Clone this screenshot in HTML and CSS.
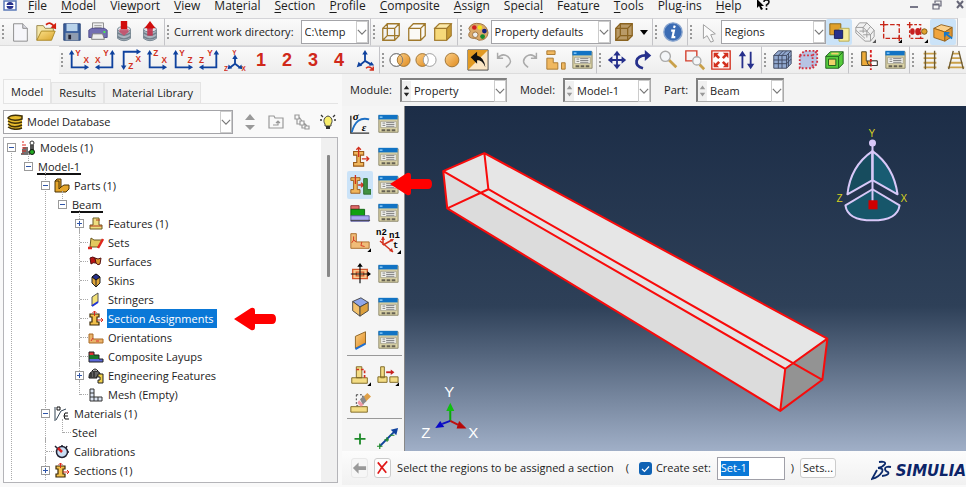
FILE: index.html
```html
<!DOCTYPE html>
<html lang="en">
<head>
<meta charset="utf-8">
<title>Abaqus/CAE</title>
<link rel="stylesheet" href="styles.css">
</head>
<body>
<svg class="defs" aria-hidden="true">
  <defs>
    <linearGradient id="gold" x1="0" y1="0" x2="1" y2="1"><stop offset="0" stop-color="#fbe08a"/><stop offset="1" stop-color="#d9a52c"/></linearGradient>
    <linearGradient id="orange" x1="0" y1="0" x2="1" y2="1"><stop offset="0" stop-color="#fbd08a"/><stop offset="1" stop-color="#e08a1c"/></linearGradient>
    <linearGradient id="sky" x1="0" y1="0" x2="0" y2="1"><stop offset="0" stop-color="#1c2d47"/><stop offset="0.58" stop-color="#2e4058"/><stop offset="1" stop-color="#a0afc7"/></linearGradient>
  </defs>
  <symbol id="i-manager" viewBox="0 0 24 24"><path d="M2 3h21v18H2z" fill="#ddd5a8" stroke="#8a8468"/><path d="M1.500 2h21v5h-21z" fill="#1173c4"/><path d="M3 4.500h3" stroke="#8fd0ff" stroke-width="1.500"/><path d="M4 9h17v7H4z" fill="#f2f2ee" stroke="#9a947a" stroke-width=".8"/><path d="M6 11h3M6 13.500h3M10 10.500h9M10 12.500h9M10 14.500h9" stroke="#777" stroke-width="1"/><path d="M5 17.800h4v2H5zM10.500 17.800h4v2h-4zM16 17.800h4v2h-4z" fill="#666253"/></symbol>
  <symbol id="i-ell-right" viewBox="0 0 24 24"><path d="M4 4v16h16" fill="none" stroke="#0f429e" stroke-width="2"/><path d="M4 1l3 5H1zM23 20l-5-3v6z" fill="#0f429e"/></symbol>
  <symbol id="i-ell-left" viewBox="0 0 24 24"><path d="M20 4v16H5" fill="none" stroke="#0f429e" stroke-width="2"/><path d="M20 1l3 5h-6zM1 20l5-3v6z" fill="#0f429e"/></symbol>
  <symbol id="i-isection" viewBox="0 0 24 24"><path d="M5 6h11v4h-3.500v8H16v4H5v-4h3.500v-8H5z" fill="#f0b65c" stroke="#9a5a18" stroke-width="1.200"/><path d="M10.500 12V1.500M8 4l2.500-2.500L13 4M14 14h7.500M19 11.500l2.500 2.500-2.500 2.500" fill="none" stroke="#d3301e" stroke-width="1.500"/></symbol>
  <symbol id="i-lpart" viewBox="0 0 16 16"><path d="M1 3l2-2h4v8l3-2h5v4l-3 3H1z" fill="#e5a62c" stroke="#4a3205"/><path d="M1 3h4v8l2-2" fill="none" stroke="#4a3205"/></symbol>
  <symbol id="i-isection-s" viewBox="0 0 16 16"><path d="M2 3h9v3H9v5h2v3H2v-3h2V6H2z" fill="#f2c14c" stroke="#3d2a08" stroke-width="1.200"/><path d="M6.500 0v5M9 9h6M13 7l2 2-2 2M4.500 2l2-2 2 2" stroke="#d92a1c" fill="none"/></symbol>
  <symbol id="i-chevron" viewBox="0 0 12 12"><path d="M1 3.500l5 5 5-5" fill="none" stroke="#777" stroke-width="1.400"/></symbol>
  <symbol id="i-callout" viewBox="0 0 44 26"><path d="M1 13L18 2q4-1 4 3v3h17q4 0 4 5t-4 5H22v3q0 4-4 3z" fill="#f00"/></symbol>
  <symbol id="i-spin" viewBox="0 0 10 20"><path d="M5 4l3 4H2zM5 16l3-4H2z" fill="currentColor"/></symbol>
</svg>

<nav class="menubar" aria-label="Main menu">
  <svg class="app-icon" viewBox="0 0 14 12"><path d="M1 1h12v9H1z" fill="#fff" stroke="#5a78b8" stroke-width="1.500"/><circle cx="7" cy="5.500" r="3.500" fill="#26308c"/><path d="M3 5.500h8" stroke="#fff"/></svg>
  <button><u>F</u>ile</button><button><u>M</u>odel</button><button>Vie<u>w</u>port</button><button><u>V</u>iew</button><button>Mat<u>e</u>rial</button><button><u>S</u>ection</button><button><u>P</u>rofile</button><button><u>C</u>omposite</button><button><u>A</u>ssign</button><button>Specia<u>l</u></button><button>Feat<u>u</u>re</button><button><u>T</u>ools</button><button>Plu<u>g</u>-ins</button><button><u>H</u>elp</button>
  <button aria-label="Context help"><svg width="14" height="12" viewBox="0 0 14 12"><path d="M1 0v8l2-2 2 4 2-1-2-3h3L2 0z"/><path d="M8 2q0-2 2.500-2T13 2q0 1.500-2.500 3v1.500M10.500 8v2" fill="none" stroke="#111" stroke-width="1.600"/></svg></button>
  <div class="window-controls">
    <button aria-label="Minimize"><svg width="12" height="12" viewBox="0 0 12 12"><path d="M2 7h8" stroke="#778" stroke-width="2"/></svg></button>
    <button aria-label="Restore"><svg width="12" height="12" viewBox="0 0 12 12"><path d="M4 3V1h6v5H8M2 4h6v5H2zM2 5h6" fill="none" stroke="#667" stroke-width="1.200"/></svg></button>
    <button aria-label="Close"><svg width="12" height="12" viewBox="0 0 12 12"><path d="M3 1l6 7M9 1L3 8" stroke="#667" stroke-width="2"/></svg></button>
  </div>
</nav>

<div class="toolbar-row">
  <div class="toolbar">
    <button class="tool" aria-label="New"><svg viewBox="0 0 24 24"><path d="M5 3h10l5 5v14H5z" fill="#f6f6fa" stroke="#888"/><path d="M15 3v5h5" fill="#d8d8e0" stroke="#888"/></svg></button>
    <button class="tool" aria-label="Open"><svg viewBox="0 0 24 24"><path d="M2 21V5h7l2 3h9v4" fill="#f4e6a8" stroke="#97854a"/><path d="M2 21l5-10h15l-4 10z" fill="url(#gold)" stroke="#a98622"/><path d="M12 4q5-4 9 2" fill="none" stroke="#d3200f" stroke-width="2"/><path d="M23 2v7l-6-2z" fill="#d3200f"/></svg></button>
    <button class="tool" aria-label="Save"><svg viewBox="0 0 24 24"><path d="M3 3h18v18H3z" fill="#3a5f9c" stroke="#2c477a"/><path d="M6 3h12v8H6z" fill="#b9d3ea"/><path d="M5 13h14v8H5z" fill="#8e9cb0"/><path d="M8 15h3v5H8z" fill="#223"/></svg></button>
    <button class="tool" aria-label="Print"><svg viewBox="0 0 24 24"><path d="M6 2h12v8H6z" fill="#eee" stroke="#888"/><path d="M8 5h8M8 7h8" stroke="#999"/><path d="M2 10l3-2h14l3 2v8H2z" fill="#726eb2" stroke="#4d4a88"/><path d="M6 14h11l2 6H5z" fill="#eee" stroke="#777"/><path d="M18 12h2" stroke="#4f4" stroke-width="2"/></svg></button>
    <button class="tool" aria-label="Save to database"><svg viewBox="0 0 24 24"><path d="M5 9v10q7 5 14 0V9z" fill="#aab5bf" stroke="#71808c"/><ellipse cx="12" cy="9" rx="7" ry="3" fill="#dfe5ea" stroke="#71808c"/><path d="M5 13q7 5 14 0M5 17q7 5 14 0" fill="none" stroke="#71808c" stroke-width="1.500"/><path d="M8.500 0h7v9h-7z" fill="#d10d0d"/><path d="M7 9h10v3l-5 4-5-4z" fill="#c4506a" opacity=".9"/></svg></button>
    <button class="tool" aria-label="Load from database"><svg viewBox="0 0 24 24"><path d="M5 9v10q7 5 14 0V9z" fill="#aab5bf" stroke="#71808c"/><ellipse cx="12" cy="9" rx="7" ry="3" fill="#dfe5ea" stroke="#71808c"/><path d="M5 13q7 5 14 0M5 17q7 5 14 0" fill="none" stroke="#71808c" stroke-width="1.500"/><path d="M9 8H6l6-8 6 8h-3v1H9z" fill="#d10d0d"/><path d="M9 8h6v8H9z" fill="#c4304a" opacity=".9"/></svg></button>
  </div>
  <div class="toolbar">
    <label class="bar-label" for="workdir">Current work directory:</label>
    <span class="combo workdir"><select id="workdir"><option>C:\temp</option></select><svg class="chev"><use href="#i-chevron"/></svg></span>
  </div>
  <div class="toolbar">
    <button class="tool" aria-label="Wireframe"><svg viewBox="0 0 24 24" fill="none" stroke="#a0792c" stroke-width="1.400"><path d="M3 8h13v13H3zM8 3h13v13H8zM3 8l5-5M16 8l5-5M16 21l5-5M3 21l5-5"/></svg></button>
    <button class="tool" aria-label="Hidden line"><svg viewBox="0 0 24 24" fill="#fbfaf6" stroke="#a0792c" stroke-width="1.400"><path d="M3 8l5-5h13v13l-5 5H3zM3 8h13v13M16 8l5-5"/></svg></button>
    <button class="tool" aria-label="Shaded"><svg viewBox="0 0 24 24" stroke="#a0792c" stroke-width="1.200"><path d="M3 8l5-5h13v13l-5 5H3z" fill="#c99c34"/><path d="M3 8h13v13H3z" fill="#f6d97a"/><path d="M3 8l5-5h13l-5 5z" fill="#fbe9a8"/></svg></button>
  </div>
  <div class="toolbar">
    <button class="tool" aria-label="Color code"><svg viewBox="0 0 24 24"><path d="M2 8q3-7 13-5 7 2 8 10-1 8-10 8-3-2-5-2-7 0-6-5 3-2 0-6z" fill="#dba968" stroke="#9a6f3c"/><circle cx="8" cy="7" r="2.500" fill="#d21f1f"/><circle cx="14" cy="7" r="2.500" fill="#f2e21c"/><circle cx="19" cy="11" r="2.600" fill="#14217c"/><circle cx="17" cy="17" r="2.600" fill="#168a2c"/><circle cx="9" cy="15" r="3" fill="#eee" stroke="#9a6f3c"/></svg></button>
    <span class="combo colors"><select aria-label="Color mapping"><option>Property defaults</option></select><svg class="chev"><use href="#i-chevron"/></svg></span>
    <button class="tool" aria-label="Translucency"><svg viewBox="0 0 24 24" fill="#b99a67" stroke="#8a6320" stroke-width="1.400"><path d="M3 8l5-5h13v13l-5 5H3z"/><path d="M3 8h13v13M16 8l5-5M8 3v13h13M3 21l5-5" fill="none"/></svg></button>
    <button class="caret" aria-label="Translucency options"><svg viewBox="0 0 14 24"><path d="M3 10h8l-4 5z"/></svg></button>
  </div>
  <div class="toolbar">
    <button class="tool" aria-label="Query"><svg viewBox="0 0 24 24"><circle cx="12" cy="12" r="10" fill="#3b6cb4" stroke="#8aa6cf" stroke-width="1.500"/><path d="M14 5l-1 2.500M10 10.500h3l-1.500 7h3" stroke="#fff" stroke-width="2.400" fill="none"/></svg></button>
  </div>
  <div class="toolbar">
    <button class="tool" aria-label="Select"><svg viewBox="0 0 24 24"><path d="M7 4v15l4-3 4 7 3-1-3-7 5-1z" fill="#fafafa" stroke="#999"/></svg></button>
    <span class="combo regions"><select aria-label="Selection filter"><option>Regions</option></select><svg class="chev"><use href="#i-chevron"/></svg></span>
    <button class="tool on" aria-label="Select from group"><svg viewBox="0 0 24 24"><path d="M2 3h12v12H2z" fill="#dfa02c" stroke="#8a6516"/><path d="M12 8h11v14H12z" fill="#f6ec9c" stroke="#b7a94c"/><path d="M7 10h9v9H7z" fill="#26308c" stroke="#141b5c"/></svg></button>
    <button class="tool" aria-label="Select entities"><svg viewBox="0 0 24 24" fill="#f1f1f1" stroke="#999"><path d="M2 7l4-5h8l8 8v7l-4 5h-6L2 13z"/><path d="M2 7h8l8 8v7M10 7l4-5M18 15l4-5M6 11h8l4-5M10 15h8M10 7v6M14 11v7M2 10l10 9" fill="none"/><path d="M24 20v4h-4z" fill="#555" stroke="none"/></svg></button>
    <button class="tool" aria-label="Drag shape"><svg viewBox="0 0 24 24"><path d="M4 4h17v15H4z" fill="none" stroke="#c8281a" stroke-width="1.500" stroke-dasharray="5 2"/><path d="M0 4h7M4 0v7M18 19h6M21 16v6" stroke="#c8281a" stroke-width="1.500"/><path d="M24 20v4h-4z"/></svg></button>
    <button class="tool" aria-label="Drag region"><svg viewBox="0 0 24 24"><path d="M4 4h12v15H4z" fill="none" stroke="#c8281a" stroke-width="1.500" stroke-dasharray="3 2"/><path d="M1 4h6M4 1v6M13 19h6" stroke="#c8281a" stroke-width="1.500"/><ellipse cx="7" cy="11.500" rx="2.500" ry="3.500" fill="#c81f1f"/><ellipse cx="13" cy="11.500" rx="3" ry="4" fill="#c81f1f"/><circle cx="20" cy="11.500" r="3" fill="#e0a22c" stroke="#7a5516"/><path d="M24 20v4h-4z"/></svg></button>
    <button class="tool on" aria-label="Select from exterior"><svg viewBox="0 0 24 24"><path d="M2 8l8-4 12 3-8 5z" fill="#fbd08a" stroke="#94601a"/><path d="M2 8l12 4v10L2 18z" fill="#f0a43c" stroke="#94601a"/><path d="M14 12l8-5v10l-8 5z" fill="#dd9430" stroke="#94601a"/><path d="M22 19l-8-6M14 17v-4h5" fill="none" stroke="#1878c8" stroke-width="2"/></svg></button>
  </div>
</div>

<div class="toolbar-row views">
  <div class="toolbar">
    <button class="tool" aria-label="Front view"><svg viewBox="0 0 24 24"><use href="#i-ell-right"/><text class="axis" x="8" y="8">Y</text><text class="axis" x="17" y="15">X</text></svg></button>
    <button class="tool" aria-label="Back view"><svg viewBox="0 0 24 24"><use href="#i-ell-left"/><text class="axis" x="10" y="8">Y</text><text class="axis" x="1" y="15">X</text></svg></button>
    <button class="tool" aria-label="Top view"><svg viewBox="0 0 24 24"><path d="M4 19V3h15" fill="none" stroke="#0f429e" stroke-width="2"/><path d="M4 23l3-5H1zM23 3l-5-3v6z" fill="#0f429e"/><text class="axis" x="17" y="14">X</text><text class="axis" x="9" y="22">Z</text></svg></button>
    <button class="tool" aria-label="Bottom view"><svg viewBox="0 0 24 24"><use href="#i-ell-right"/><text class="axis" x="8" y="8">Z</text><text class="axis" x="17" y="15">X</text></svg></button>
    <button class="tool" aria-label="Left view"><svg viewBox="0 0 24 24"><use href="#i-ell-right"/><text class="axis" x="8" y="8">Y</text><text class="axis" x="17" y="15">Z</text></svg></button>
    <button class="tool" aria-label="Right view"><svg viewBox="0 0 24 24"><use href="#i-ell-left"/><text class="axis" x="10" y="8">Y</text><text class="axis" x="1" y="15">Z</text></svg></button>
    <button class="tool" aria-label="Isometric view"><svg viewBox="0 0 24 24"><path d="M12 8v8M12 16l-5 4M12 16l5 4" stroke="#0f429e" stroke-width="2"/><path d="M12 6l3 5H9zM4 22l1-5 4 4zM20 22l-1-5-4 4z" fill="#0f429e"/><text class="axis small" x="9" y="6">Y</text><text class="axis small" x="0" y="24">Z</text><text class="axis small" x="19" y="24">X</text></svg></button>
    <button class="tool num">1</button><button class="tool num">2</button><button class="tool num">3</button><button class="tool num">4</button>
    <button class="tool" aria-label="Custom view"><svg viewBox="0 0 24 24"><path d="M12 5v8l-6 5M12 13l7 4" fill="none" stroke="#0f429e" stroke-width="2"/><path d="M12 1l3 5H9zM3 20l2-6 4 4zM22 18l-6 0 3-4z" fill="#0f429e"/><path d="M13 21q4-3 7 1M21 19v4h-4" fill="none" stroke="#d3301e" stroke-width="1.600"/></svg></button>
  </div>
  <div class="toolbar">
    <button class="tool" aria-label="Intersection"><svg viewBox="0 0 24 24"><circle cx="8" cy="12" r="7" fill="#fff" stroke="#999"/><circle cx="16" cy="12" r="7" fill="url(#orange)" stroke="#9a7030"/><circle cx="8" cy="12" r="7" fill="none" stroke="#777"/></svg></button>
    <button class="tool" aria-label="Difference"><svg viewBox="0 0 24 24"><circle cx="8" cy="12" r="7" fill="url(#orange)" stroke="#9a7030"/><circle cx="16" cy="12" r="7" fill="#fff" stroke="#999"/><path d="M12 6q5 6 0 12" fill="none" stroke="#999"/></svg></button>
    <button class="tool" aria-label="Replace"><svg viewBox="0 0 24 24"><circle cx="12" cy="12" r="7.500" fill="url(#orange)" stroke="#9a7030"/></svg></button>
    <button class="tool" aria-label="Replace all"><svg viewBox="0 0 24 24"><path d="M1 1h22v22H1z" fill="#fbe6c4" stroke="#444"/><path d="M1 1h22L1 23z" fill="#e29a22"/><path d="M4 9l7-6v4q8 2 9 13-3-8-9-8v4z" fill="#111"/></svg></button>
    <button class="tool" aria-label="Undo"><svg viewBox="0 0 24 24" fill="none" stroke="#aaa" stroke-width="1.600"><path d="M5 4v6h6M5 10q5-6 11-2 7 6-2 12"/></svg></button>
    <button class="tool" aria-label="Redo"><svg viewBox="0 0 24 24" fill="none" stroke="#aaa" stroke-width="1.600"><path d="M19 4v6h-6M19 10q-5-6-11-2-7 6 2 12"/></svg></button>
    <button class="tool" aria-label="Instances"><svg viewBox="0 0 24 24" fill="#f0b860" stroke="#a8762c"><path d="M2 2h9v4H2zM2 10h7v5h5v7H2zM18 15h4v7h-4z"/></svg></button>
    <button class="tool" aria-label="Display group manager"><svg viewBox="0 0 24 24"><use href="#i-manager"/></svg></button>
  </div>
  <div class="toolbar">
    <button class="tool" aria-label="Pan"><svg viewBox="0 0 24 24" stroke="#26308c" stroke-width="2" fill="#26308c"><path d="M12 4v16M4 12h16"/><path d="M12 2l4 5H8zM12 22l4-5H8zM2 12l5-4v8zM22 12l-5-4v8z" stroke="none"/></svg></button>
    <button class="tool" aria-label="Rotate"><svg viewBox="0 0 24 24"><path d="M12 21q-8-2-7-8 2-7 12-6" fill="none" stroke="#26308c" stroke-width="3"/><path d="M14 1l7 6-7 6z" fill="#26308c"/></svg></button>
    <button class="tool" aria-label="Magnify"><svg viewBox="0 0 24 24"><path d="M12 12l8 8" stroke="#c9a04a" stroke-width="3"/><circle cx="8" cy="8" r="5.500" fill="#f4f6f8" stroke="#aaa" stroke-width="1.500"/></svg></button>
    <button class="tool" aria-label="Box zoom"><svg viewBox="0 0 24 24"><path d="M2 2h12v11H2z" fill="none" stroke="#d3402e" stroke-width="1.500"/><path d="M17 17l5 5" stroke="#c9a04a" stroke-width="3"/><circle cx="14" cy="13" r="4.500" fill="#f4f6f8" stroke="#aaa" stroke-width="1.500"/></svg></button>
    <button class="tool" aria-label="Auto-fit"><svg viewBox="0 0 24 24"><path d="M2 2h20v20H2z" fill="#fff" stroke="#d3301e" stroke-width="1.500"/><path d="M4 4h6L8 6l3 3-2 2-3-3-2 2zM20 4v6l-2-2-3 3-2-2 3-3-2-2zM4 20v-6l2 2 3-3 2 2-3 3 2 2zM20 20h-6l2-2-3-3 2-2 3 3 2-2z" fill="#d3301e"/></svg></button>
    <button class="tool" aria-label="Cycle views"><svg viewBox="0 0 24 24"><path d="M7 6v15M16 3v15" stroke="#26308c" stroke-width="2"/><path d="M7 2l4 6H3zM16 22l4-6h-8z" fill="#26308c"/></svg></button>
  </div>
  <div class="toolbar">
    <button class="tool" aria-label="Mesh view"><svg viewBox="0 0 24 24" stroke="#3d465e"><path d="M3 7l5-5h14v14l-5 5H3z" fill="#91a8cf"/><path d="M3 7h14v14M17 7l5-5M8 7v14M12 7v14M3 12h14l5-5M3 16h14l5-5M8 7l5-5M12 7l5-5M19 5v14" fill="none"/></svg></button>
    <button class="tool" aria-label="Mesh nodes"><svg viewBox="0 0 24 24"><path d="M3 7l5-5h14v14l-5 5H3z" fill="#b7c3e4"/><path d="M3 7l5-5h14v14l-5 5H3zM3 7h14v14M17 7l5-5" fill="none" stroke="#d3303e" stroke-width="2" stroke-dasharray="2 2"/></svg></button>
    <button class="tool" aria-label="Reference view"><svg viewBox="0 0 24 24" stroke="#1d5c1d"><path d="M3 8l5-5h14v13l-5 5H3z" fill="#56cc3c"/><path d="M3 8h14v13M17 8l5-5" fill="none"/><path d="M6 11h8v7H6z" fill="#efd36a"/><path d="M9 5h8" stroke="#efd36a" stroke-width="2"/></svg></button>
  </div>
  <div class="toolbar">
    <button class="tool" aria-label="Beam offset"><svg viewBox="0 0 24 24"><path d="M4 3h5v10h12v5H4z" fill="#edaa38" stroke="#4c3d18"/><path d="M14 13h7v5h-7z" fill="#fff" stroke="#333"/><path d="M14 1v22" stroke="#d91e1e" stroke-width="2" stroke-dasharray="3 2"/><path d="M10 13q0 5 4 5" fill="none" stroke="#333"/></svg></button>
    <button class="tool" aria-label="Manager"><svg viewBox="0 0 24 24"><use href="#i-manager"/></svg></button>
  </div>
  <div class="toolbar">
    <button class="tool" aria-label="Parallel"><svg viewBox="0 0 24 24"><path d="M5 5h14M5 10h14M5 15h14M5 20h14" stroke="#c9a04a" stroke-width="2"/><path d="M7 2v20M17 2v20" stroke="#6d5a30" stroke-width="1.500"/></svg></button>
    <button class="tool" aria-label="Perspective"><svg viewBox="0 0 24 24"><path d="M8 5h8M7 10h10M5 15h14M3 20h18" stroke="#c9a04a" stroke-width="2"/><path d="M9 2L4 22M15 2l5 20" stroke="#6d5a30" stroke-width="1.500"/></svg></button>
  </div>
</div>

<div class="workspace">
  <aside class="browser">
    <div class="tabs" role="tablist">
      <button class="tab active" role="tab" aria-selected="true">Model</button><button class="tab" role="tab">Results</button><button class="tab" role="tab">Material Library</button>
    </div>
    <div class="tree-tools">
      <span class="combo database">
        <svg class="db-icon" viewBox="0 0 16 16"><path d="M1 3v4l1 6q6 4 13 1V2z" fill="#e6bb2e"/><path d="M1 4q3-4 14-2v3Q6 8 1 4zM1 7q5 4 14 1M1 10q5 5 14 1M1 13q6 4 14 1" fill="#e6bb2e" stroke="#3f3008" stroke-width="1.500"/></svg>
        <select aria-label="Database"><option>Model Database</option></select><svg class="chev"><use href="#i-chevron"/></svg>
      </span>
      <button class="mini" aria-label="Previous or next"><svg viewBox="0 0 18 18" fill="#999"><path d="M9 1l5 6H4zM9 17l5-5H4z"/></svg></button>
      <button class="mini" aria-label="Up"><svg viewBox="0 0 18 18" fill="none" stroke="#999" stroke-width="1.200"><path d="M2 15V3h5l1 2h8v10zM6 12h5V8M9 10l2-2 2 2"/></svg></button>
      <button class="mini" aria-label="Structure"><svg viewBox="0 0 18 18" fill="none" stroke="#999" stroke-width="1.200"><path d="M2 2h4v4H2zM7 8h4v4H7zM12 13h4v3h-4zM6 4l3 4M4 6v5h3M9 12v3h3M11 10l3 3"/></svg></button>
      <button class="mini" aria-label="Tips"><svg viewBox="0 0 18 18"><path d="M9 3a5 5 0 0 1 3 8v2H6v-2a5 5 0 0 1 3-8z" fill="#f8ee6c" stroke="#444"/><path d="M7 13h4v3H7z" fill="#333"/><path d="M1 7h2M15 7h2M2 2l2 2M16 2l-2 2" stroke="#333" stroke-width="1.300"/></svg></button>
    </div>
    <div class="tree-box">
      <ul class="tree">
        <li class="more"><div class="row"><button class="exp minus" aria-label="Collapse"></button><svg class="ico" viewBox="0 0 16 16"><path d="M1 14h9M2 12h7M2 10h6M3 8h5" stroke="#444" stroke-width="1.300"/><path d="M3 1v13M5 4v8" stroke="#e0281e" stroke-dasharray="2 1"/><path d="M10 5h4v8h-4z" fill="#555"/><circle cx="12" cy="12" r="2.500" fill="#2a2" stroke="#111"/><circle cx="12" cy="3" r="2" fill="#fff" stroke="#333"/></svg><span class="name">Models (1)</span></div>
          <ul>
            <li><div class="row"><button class="exp minus" aria-label="Collapse"></button><span class="name current">Model-1</span></div>
              <ul>
                <li><div class="row"><button class="exp minus" aria-label="Collapse"></button><svg class="ico"><use href="#i-lpart"/></svg><span class="name">Parts (1)</span></div>
                  <ul>
                    <li><div class="row"><button class="exp minus" aria-label="Collapse"></button><span class="name current">Beam</span></div>
                      <ul>
                        <li><div class="row"><button class="exp plus" aria-label="Expand"></button><svg class="ico" viewBox="0 0 16 16"><path d="M5 9V2h6v7h3v4H2V9z" fill="#eedd80" stroke="#6b5a22"/><path d="M8 4h4M2 10h12" stroke="#b23a1e"/></svg><span class="name">Features (1)</span></div></li>
                        <li><div class="row leaf"><svg class="ico" viewBox="0 0 16 16"><path d="M3 3l3 2h8l-3 7H2z" fill="#e3c85e" stroke="#6b5a22"/><path d="M10 13l5-9M0 13h4" stroke="#e0281e" stroke-width="2.500"/></svg><span class="name">Sets</span></div></li>
                        <li><div class="row leaf"><svg class="ico" viewBox="0 0 16 16"><path d="M2 4q3-2 5 0l1 5q-3-1-5 1z" fill="#b81414" stroke="#561010"/><path d="M7 4q3 2 6 0l-1 6q-2 2-4-1z" fill="#d9952e" stroke="#561010"/></svg><span class="name">Surfaces</span></div></li>
                        <li><div class="row leaf"><svg class="ico" viewBox="0 0 16 16"><path d="M4 4l4-3 4 3v6l-4 4-4-4z" fill="#e0a63a" stroke="#222"/><path d="M4 4l4-3 4 3-4 3z" fill="#26308c" stroke="#111"/><path d="M8 7v7" stroke="#222"/></svg><span class="name">Skins</span></div></li>
                        <li><div class="row leaf"><svg class="ico" viewBox="0 0 16 16"><path d="M4 5l6-4v9l-6 4z" fill="#f3e178" stroke="#555"/><path d="M4 14l6-4" stroke="#2036d8" stroke-width="2"/></svg><span class="name">Stringers</span></div></li>
                        <li><div class="row leaf"><svg class="ico"><use href="#i-isection-s"/></svg><span class="name selected">Section Assignments</span><svg class="callout"><use href="#i-callout"/></svg></div></li>
                        <li><div class="row leaf"><svg class="ico" viewBox="0 0 16 16"><path d="M1 4h4v5h10v4H1z" fill="#eab26a" stroke="#a86a26"/><path d="M3 11l2-3M8 11h3" stroke="#d33"/></svg><span class="name">Orientations</span></div></li>
                        <li><div class="row leaf"><svg class="ico" viewBox="0 0 16 16"><path d="M1 3h5v3H1z" fill="#d33"/><path d="M1 6h10v4H1z" fill="#187a2a"/><path d="M1 10h14v3H1z" fill="#5a68d8"/><path d="M1 3h5v3h5v4h4v3H1z" fill="none" stroke="#222"/></svg><span class="name">Composite Layups</span></div></li>
                        <li><div class="row"><button class="exp plus" aria-label="Expand"></button><svg class="ico" viewBox="0 0 16 16"><path d="M1 9q0-6 6-6t5 5H9v2H1z" fill="#666" stroke="#111"/><path d="M4 3q3-4 6 0M3 5v4M6 4v5" fill="none" stroke="#111"/><path d="M10 6h5v9h-5v-3h2v-3h-2z" fill="#f0d04a" stroke="#222"/></svg><span class="name">Engineering Features</span></div></li>
                        <li><div class="row leaf"><svg class="ico" viewBox="0 0 16 16"><path d="M2 2h4v8h8v4H2zM2 6h4M2 10h4v4M10 10v4" fill="#dce4f2" stroke="#333"/></svg><span class="name">Mesh (Empty)</span></div></li>
                      </ul>
                    </li>
                  </ul>
                </li>
                <li><div class="row"><button class="exp minus" aria-label="Collapse"></button><svg class="ico" viewBox="0 0 16 16"><path d="M1 1v14M2 14l5-9 5-2" fill="none" stroke="#345"/><path d="M6 1H3v3h3V1M14 7h-3l-1 3 1 3h4M10 10h4" fill="none" stroke="#111"/></svg><span class="name">Materials (1)</span></div>
                  <ul><li><div class="row leaf"><span class="name">Steel</span></div></li></ul>
                </li>
                <li><div class="row leaf"><svg class="ico" viewBox="0 0 16 16"><circle cx="8" cy="8" r="5.500" fill="#c9def4" stroke="#223" stroke-width="1.500"/><path d="M1 2l3 3M15 8h-2M8 1v2M13 2l-1 2" stroke="#223" stroke-width="1.500"/><path d="M8 8L4 4" stroke="#d22" stroke-width="2.500"/></svg><span class="name">Calibrations</span></div></li>
                <li class="more"><div class="row"><button class="exp plus" aria-label="Expand"></button><svg class="ico"><use href="#i-isection-s"/></svg><span class="name">Sections (1)</span></div></li>
              </ul>
            </li>
          </ul>
        </li>
      </ul>
      <div class="scrollbar"><span></span></div>
    </div>
  </aside>

  <main class="stage">
    <div class="context">
      <label for="module">Module:</label>
      <span class="combo sunken module"><svg class="spin"><use href="#i-spin"/></svg><select id="module"><option>Property</option></select><svg class="chev"><use href="#i-chevron"/></svg></span>
      <label for="model">Model:</label>
      <span class="combo sunken"><svg class="spin dim"><use href="#i-spin"/></svg><select id="model"><option>Model-1</option></select><svg class="chev"><use href="#i-chevron"/></svg></span>
      <label for="part">Part:</label>
      <span class="combo sunken"><svg class="spin dim"><use href="#i-spin"/></svg><select id="part"><option>Beam</option></select><svg class="chev"><use href="#i-chevron"/></svg></span>
    </div>
    <div class="canvas-row">
      <div class="toolbox">
        <div class="set">
          <button class="tool" aria-label="Create material"><svg viewBox="0 0 24 24"><path d="M2 3v19h20" fill="none" stroke="#333" stroke-width="1.500"/><path d="M3 21Q8 3 22 7" fill="none" stroke="#1d6fc4" stroke-width="2"/><text class="greek" x="4" y="8">σ</text><text class="greek" x="14" y="20">ε</text></svg></button>
          <button class="tool" aria-label="Material manager"><svg><use href="#i-manager"/></svg></button>
        </div>
        <div class="set">
          <button class="tool" aria-label="Create section"><svg><use href="#i-isection"/></svg></button>
          <button class="tool" aria-label="Section manager"><svg><use href="#i-manager"/></svg></button>
          <button class="tool on" aria-label="Assign section"><svg viewBox="0 0 24 24"><path d="M2 4h10v3H9v10h3v4H2v-4h3V7H2z" fill="#f0b65c" stroke="#9a5a18"/><path d="M7 1v10M10 12h5M13 9.500l3 2.500-3 2.500" stroke="#d3301e" stroke-width="1.400" fill="none"/><path d="M16 5h4v12h4v5h-8z" fill="#3f9142" stroke="#2a6a2c"/></svg></button>
          <button class="tool target" aria-label="Section assignment manager"><svg><use href="#i-manager"/></svg><svg class="callout"><use href="#i-callout"/></svg></button>
          <button class="tool" aria-label="Create composite layup"><svg viewBox="0 0 24 24"><path d="M2 4h9v4H2z" fill="#e26a6a" stroke="#8a3030"/><path d="M2 8h15v7H2z" fill="#12a012" stroke="#0b5f0b"/><path d="M2 15h20v6H2z" fill="#a8a8f0" stroke="#5a5a9c"/><path d="M2 20h21" stroke="#333"/></svg></button>
          <button class="tool" aria-label="Layup manager"><svg><use href="#i-manager"/></svg></button>
          <button class="tool" aria-label="Assign orientation"><svg viewBox="0 0 24 24"><path d="M2 4h6v9h14v7H2z" fill="#f0bc78" stroke="#a86a26"/><path d="M5 7v4M5 11l-2 3M5 11l3 2M14 13l-1 4M13 17l4 1" stroke="#d3301e"/><path d="M24 20v4h-4z"/></svg></button>
          <button class="tool wide" aria-label="Assign beam orientation"><svg viewBox="0 0 26 26"><path d="M8 17V9M8 17l9-5M5 13l13 11" stroke="#d3301e" stroke-width="1.500"/><path d="M8 8l2 4H6zM19 11l-4 0 2 3zM18 24l-1-4-3 3z" fill="#d3301e"/><text class="mono" x="1" y="7">n2</text><text class="mono" x="14" y="10">n1</text><text class="mono" x="18" y="20">t</text><path d="M26 22v4h-4z"/></svg></button>
        </div>
        <div class="set">
          <button class="tool" aria-label="Create profile"><svg viewBox="0 0 24 24"><path d="M4 7h16v10H4zM8 10h8v4H8z" fill="#fbc88a" stroke="#d3582e" stroke-width="1.500"/><path d="M12 2v20M2 12h20" stroke="#111" stroke-width="1.300"/><path d="M12 0l3 4H9zM24 12l-4-3v6z"/></svg></button>
          <button class="tool" aria-label="Profile manager"><svg><use href="#i-manager"/></svg></button>
        </div>
        <div class="set">
          <button class="tool" aria-label="Create skin"><svg viewBox="0 0 24 24" stroke="#444"><path d="M4 6l9-4 8 5-9 5z" fill="#8fa6e8"/><path d="M4 6l8 6v10l-8-6z" fill="#f4c26c"/><path d="M12 12l9-5v9l-9 6z" fill="#dda03c"/></svg></button>
          <button class="tool" aria-label="Skin manager"><svg><use href="#i-manager"/></svg></button>
        </div>
        <div class="set">
          <button class="tool" aria-label="Create stringer"><svg viewBox="0 0 24 24"><path d="M7 8l11-5v13L7 21z" fill="url(#orange)" stroke="#8a6020"/><path d="M7 22l11-6" stroke="#1d6fd4" stroke-width="2"/></svg></button>
          <button class="tool" aria-label="Stringer manager"><svg><use href="#i-manager"/></svg></button>
        </div>
        <hr>
        <div class="set">
          <button class="tool" aria-label="Edit feature"><svg viewBox="0 0 24 24"><path d="M8 3h6v12H8zM3 15h17v6H3z" fill="#f3dc84" stroke="#7a6420"/><path d="M8 6h9v9" fill="none" stroke="#d3301e" stroke-width="1.800" stroke-dasharray="3 2"/><path d="M24 20v4h-4z"/></svg></button>
          <button class="tool" aria-label="Suppress feature"><svg viewBox="0 0 24 24"><path d="M4 3h4v12H4zM1 14h10v6H1zM14 14h9v6h-9z" fill="#f3dc84" stroke="#7a6420"/><path d="M10 9h6" stroke="#c8201e" stroke-width="2"/><path d="M19 9l-4-3v6z" fill="#c8201e"/><path d="M24 20v4h-4z"/></svg></button>
          <button class="tool" aria-label="Delete feature"><svg viewBox="0 0 24 24"><path d="M8 3h7v12H8z" fill="none" stroke="#333" stroke-dasharray="2 2"/><path d="M2 16h18v6H2z" fill="#f3dc84" stroke="#7a6420"/><path d="M16 5l4-4 4 4-6 6z" fill="#dfa048"/><path d="M12 8l4-4 3 6-4 4z" fill="#8a8a8a"/><path d="M11 9l5 5-3 2-4-4z" fill="#f29aa6"/></svg></button>
        </div>
        <hr>
        <div class="set">
          <button class="tool" aria-label="Create datum point"><svg viewBox="0 0 24 24"><path d="M12 7v12M6 13h12" stroke="#1e8a2a" stroke-width="2"/></svg></button>
          <button class="tool" aria-label="Create datum axis"><svg viewBox="0 0 24 24"><path d="M3 21L20 4" stroke="#0f429e" stroke-width="2"/><path d="M23 1l-2 8-6-6z" fill="#0f429e"/><path d="M0 21h6M3 18v6M8 14h5M11 11v5M14 9h5" stroke="#1e8a2a" stroke-width="1.300"/></svg></button>
        </div>
      </div>
      <svg class="viewport" viewBox="405 106 561 344" preserveAspectRatio="xMidYMid slice" role="img" aria-label="Beam part">
        <rect x="405" y="106" width="561" height="344" fill="url(#sky)"/>
        <path d="M444 171l41-18 342 185-42 30z" fill="#e6e6e6"/>
        <path d="M444 171l341 197-5 42L448 208z" fill="#dcdcdc"/>
        <path d="M444 171l41-18 4 36 296 170v9z" fill="#e4e4e4"/>
        <path d="M785 368l42-30-5 41-42 31z" fill="#939393"/>
        <path d="M444 171l41-18 342 185-5 41-42 31L448 208zM444 171l341 197 42-30M785 368l-5 42M485 153l4 36 333 190M489 189l-41 19" fill="none" stroke="#f80b0b" stroke-width="2" stroke-linejoin="round"/>
        <g stroke="#d8c8f8" stroke-width="2" stroke-linejoin="round">
          <path d="M872 151q-22 15-25 43l25-14z" fill="#174c5e"/>
          <path d="M872 151q21 15 25 43l-25-14z" fill="#185c72"/>
          <path d="M872 189l27 16q-2 15-27 15t-27-15z" fill="#17566a"/>
          <path d="M872 142v61"/><circle cx="872" cy="143" r="2.500" fill="#d8c8f8"/>
        </g>
        <rect x="868" y="200" width="9" height="9" fill="#d00000"/>
        <g class="compass"><text x="868" y="137">Y</text><text x="836" y="202">Z</text><text x="900" y="202">X</text></g>
        <path d="M451 420v-10" stroke="#0aa80a" stroke-width="2"/><path d="M451 402l4 8h-8z" fill="#0fc00f"/>
        <path d="M451 420l-8 3" stroke="#1010c0" stroke-width="2"/><path d="M436 427l5-7 4 6z" fill="#0808c8"/>
        <path d="M451 420l8 4" stroke="#c01010" stroke-width="2"/><path d="M466 427l-8 0 2-6z" fill="#b80808" stroke="#b80808"/>
        <g class="triad"><text x="445" y="396">Y</text><text x="422" y="437">Z</text><text x="469" y="437">X</text></g>
      </svg>
    </div>
    <div class="prompt">
      <button class="key ghost" aria-label="Previous"><svg viewBox="0 0 16 18"><path d="M1 9l6-6v4h8v4H7v4z" fill="#999"/></svg></button>
      <button class="key" aria-label="Cancel"><svg viewBox="0 0 16 18"><path d="M3 3l9 11M13 2Q7 8 3 15" fill="none" stroke="#e01818" stroke-width="1.800"/></svg></button>
      <span class="message">Select the regions to be assigned a section</span>
      <span class="open">(</span>
      <label class="check"><input type="checkbox" checked><svg class="tick" viewBox="0 0 13 13"><path d="M3 7l2.500 2.500L10 4.500" fill="none" stroke="#fff" stroke-width="1.200"/></svg><span>Create set:</span></label>
      <span class="set-name"><input type="text" value="Set-1" aria-label="Set name"></span>
      <span>)</span>
      <button class="key sets">Sets...</button>
      <div class="brand">
        <svg viewBox="0 0 22 22"><path d="M8 2q7-1 6 2-2 3-7 4M7 8q6 0 4 4-3 5-10 7l5-9M20 7q-6-1-6 2 0 2 3 3 2 3-6 4" fill="none" stroke="#0b2a6c" stroke-width="1.800"/></svg>
        <span>SIMULIA</span>
      </div>
    </div>
  </main>
</div>
</body>
</html>
```

FILE: styles.css
```css
* { box-sizing: border-box; }

html, body { height: 100%; }

body {
  margin: 0;
  display: flex;
  flex-direction: column;
  overflow: hidden;
  background: #f9f9f9;
  color: #1c1c1c;
  font: 11px/16px "Open Sans", "Noto Sans", sans-serif;
}

button, select, input { font: inherit; color: inherit; }

button {
  margin: 0;
  padding: 0;
  border: 0;
  background: none;
}

.defs { position: absolute; width: 0; height: 0; }

/* Menu bar */
.menubar {
  display: flex;
  flex: none;
  align-items: flex-start;
  gap: 14px;
  height: 18px;
  padding: 0 0 0 3px;
  background: #f4f4f4;
  font-size: 12px;
}
.menubar button { flex: none; height: 12px; line-height: 12px; white-space: nowrap; }
.menubar u { text-underline-offset: 2px; }
.menubar svg { display: block; }
.app-icon { flex: none; width: 14px; height: 12px; margin-right: -3px; }
.window-controls { display: flex; gap: 11px; margin-left: auto; }

/* Toolbars */
.toolbar-row { display: flex; flex: none; height: 28px; overflow: hidden; }
.views { padding-left: 59px; }
.toolbar {
  display: flex;
  flex: none;
  align-items: center;
  padding-right: 1px;
  border-right: 1px solid #c4c4c8;
  border-top: 1px solid #d4d4d8;
  border-bottom: 1px solid #dcdcdc;
  background: linear-gradient(#fafafa, #ededed);
}
.toolbar::before {
  content: "";
  flex: none;
  width: 2px;
  height: 15px;
  margin: 0 3px 0 2px;
  background: repeating-linear-gradient(#999 0 2px, transparent 2px 4px);
}
.tool { flex: none; display: grid; place-items: center; width: 26px; height: 26px; border-radius: 2px; }
.tool svg { display: block; width: 22px; height: 22px; }
.tool.wide svg { width: 26px; height: 26px; }
.tool.on { background: #cbe3f8; }
.tool.num { color: #d0281a; font: bold 18px/24px "Liberation Sans", sans-serif; }
.caret svg { display: block; width: 14px; height: 24px; }
.bar-label { padding: 0 7px 0 2px; }
.axis { font: bold 9px "Liberation Sans", sans-serif; fill: #d0301c; }
.axis.small { font-size: 7px; }

/* Combo boxes */
.combo {
  display: grid;
  align-items: center;
  height: 24px;
  border: 1px solid #a4a4a8;
  background: #fff;
}
.combo > * { grid-row: 1; grid-column: 1; }
.combo select {
  width: 100%;
  height: 20px;
  padding: 0 14px 0 3px;
  border: 0;
  outline: 0;
  appearance: none;
  background: none;
}
.chev {
  justify-self: end;
  width: 12px;
  height: 22px;
  border: 1px solid #ccc;
  background: #fff;
  pointer-events: none;
}
.workdir { width: 68px; }
.colors { width: 120px; }
.regions { width: 105px; }

/* Layout below the toolbars */
.workspace { display: flex; flex: 1; min-height: 0; }

.browser {
  display: flex;
  flex: 0 0 35%;
  flex-direction: column;
  min-width: 0;
  padding: 6px 0 4px 3px;
}
.tabs { display: flex; flex: none; align-items: flex-end; height: 24px; border-bottom: 1px solid #e4e4e4; }
.tab { height: 21px; padding: 0 7px; border: 1px solid #e4e4e4; border-bottom: 0; background: #f2f2f2; white-space: nowrap; }
.tab.active { height: 24px; background: #fafafa; }
.tree-tools { display: flex; flex: none; align-items: center; gap: 8px; padding: 6px 1px 3px 0; }
.database { flex: 1; }
.database select { padding-left: 23px; }
.db-icon { width: 16px; height: 16px; margin-left: 3px; }
.mini { flex: none; width: 18px; height: 18px; }
.mini svg { display: block; width: 18px; height: 18px; }

.tree-box { display: flex; flex: 1; min-height: 0; border: 1px solid #b4b4b8; background: #fff; }
.tree { flex: 1; overflow: hidden; }
.tree, .tree ul { margin: 0; padding: 0; list-style: none; }
.tree ul { padding-left: 17px; }
.tree li { position: relative; }
.tree li::before {
  content: "";
  position: absolute;
  top: -4px;
  bottom: 0;
  left: 7px;
  border-left: 1px dotted #aaa;
}
.tree li:last-child:not(.more)::before { bottom: auto; height: 14px; }
.tree > li::before { top: 9px; }
.row { position: relative; display: flex; align-items: center; height: 19px; }
.row.leaf::before { content: ""; width: 8px; margin-left: 8px; border-top: 1px dotted #aaa; }
.exp {
  flex: none;
  position: relative;
  width: 9px;
  height: 9px;
  margin: 0 4px 0 3px;
  border: 1px solid #9a9a9a;
  background: linear-gradient(#2f55a8, #2f55a8) center / 5px 1px no-repeat, #fff;
}
.exp.plus {
  background: linear-gradient(#2f55a8, #2f55a8) center / 5px 1px no-repeat, linear-gradient(#2f55a8, #2f55a8) center / 1px 5px no-repeat, #fff;
}
.ico { flex: none; width: 16px; height: 16px; margin-right: 3px; }
.name { padding: 0 1px; line-height: 19px; white-space: nowrap; }
.name.current { height: 17px; line-height: 17px; border-bottom: 2px solid #111; }
.name.selected { padding-right: 3px; background: #0a78d7; color: #fff; }
.row .callout { width: 44px; height: 26px; margin: 0 0 0 16px; }
.scrollbar { flex: none; width: 16px; padding: 17px 0 0 6px; background: #f0f0f0; }
.scrollbar span { display: block; width: 3px; height: 122px; border-radius: 1px; background: #888; }

/* Module area */
.stage { display: flex; flex: 1; flex-direction: column; min-width: 0; padding: 0 0 2px 4px; }
.context { display: flex; flex: none; align-items: center; gap: 8px; height: 32px; padding-left: 8px; background: #f3f3f3; }
.context .combo { width: 88px; margin-right: 5px; }
.context .module { width: 107px; }
.sunken { border: 1px solid #aaa; border-top: 2px solid #808080; border-left: 2px solid #808080; }
.sunken select { padding-left: 12px; }
.spin { width: 9px; height: 20px; background: #f0f0f0; color: #222; }
.spin.dim { color: #999; }
.canvas-row { display: flex; flex: 1; min-height: 0; }
.toolbox {
  display: flex;
  flex: none;
  flex-direction: column;
  gap: 5px;
  width: 63px;
  padding: 4px 2px 0 5px;
  overflow: visible;
  background: #f5f5f5;
  border-right: 1px solid #888;
}
.set { display: grid; flex: none; grid-template-columns: 26px 26px; column-gap: 2px; }
.set .tool { height: 28px; }
.toolbox hr { flex: none; width: 100%; height: 1px; margin: -4px 0 0; border: 0; background: #999; }
.target { position: relative; z-index: 1; }
.target .callout { position: absolute; top: 0; left: 14px; width: 44px; height: 26px; }
.greek { font: italic bold 12px "Liberation Serif", serif; }
.mono { font: bold 9px "Liberation Mono", monospace; }
.viewport { flex: 1; min-width: 0; height: 100%; }
.compass { font: 10px "Liberation Sans", sans-serif; fill: #d8d020; }
.triad { font: 15px "Liberation Sans", sans-serif; fill: #fff; }

/* Prompt line */
.prompt { display: flex; flex: none; align-items: center; gap: 6px; height: 34px; padding-left: 9px; background: linear-gradient(#fcfcfc, #f1f1f1); white-space: nowrap; }
.key { flex: none; width: 17px; height: 20px; border: 1px solid #ccc; border-radius: 3px; background: #fdfdfd; }
.key svg { display: block; width: 15px; height: 18px; }
.key.ghost { border-color: #e8e8e8; background: #f6f6f6; }
.key.sets { width: 36px; }
.open { padding: 0 4px 0 6px; }
.check { display: grid; grid-template-columns: 13px auto; align-items: center; column-gap: 4px; }
.check input { grid-area: 1 / 1; width: 13px; height: 13px; margin: 0; appearance: none; border-radius: 3px; background: #0f62b4; }
.tick { grid-area: 1 / 1; width: 13px; height: 13px; pointer-events: none; }
.set-name { display: flex; width: 68px; height: 23px; padding: 3px; border: 1px solid #a0a0a8; background: #fff; }
.set-name input { width: 28px; height: 15px; padding: 0; border: 0; outline: 0; background: #0a78d7; color: #fff; }
.brand { display: flex; align-items: center; gap: 3px; margin-left: auto; padding-top: 5px; color: #0b2468; font: italic bold 15px/20px "DejaVu Sans", sans-serif; }
.brand svg { width: 22px; height: 22px; }
```
